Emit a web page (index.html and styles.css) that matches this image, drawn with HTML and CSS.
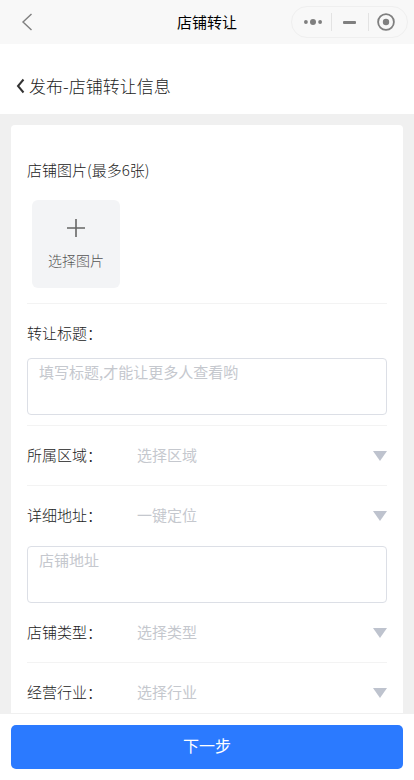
FILE: index.html
```html
<!DOCTYPE html>
<html lang="zh-CN">

<head>
    <meta charset="UTF-8">
    <meta name="viewport" content="width=device-width, initial-scale=1.0">
    <title>店铺转让</title>
    <link rel="stylesheet" href="styles.css">
</head>

<body>
    <div class="nav-bar">
        <svg class="nav-back" width="14" height="20" viewBox="0 0 14 20">
            <path d="M11.5 2 L3 10 L11.5 18" fill="none" stroke="#7f7f7f" stroke-width="1.4" />
        </svg>
        <span class="nav-title">店铺转让</span>
        <div class="capsule">
            <svg class="capsule-icon" width="18" height="8" viewBox="0 0 18 8">
                <circle cx="1.9" cy="4" r="1.9" fill="#7f7f7f" />
                <circle cx="9" cy="4" r="3" fill="#7f7f7f" />
                <circle cx="16.1" cy="4" r="1.9" fill="#7f7f7f" />
            </svg>
            <span class="capsule-line"></span>
            <span class="capsule-minus"></span>
            <span class="capsule-line"></span>
            <svg class="capsule-icon" width="18" height="18" viewBox="0 0 18 18">
                <circle cx="9" cy="9" r="7.9" fill="none" stroke="#7f7f7f" stroke-width="1.8" />
                <circle cx="9" cy="9" r="3.2" fill="#7f7f7f" />
            </svg>
        </div>
    </div>

    <div class="page-head">
        <svg width="9" height="16" viewBox="0 0 9 16">
            <path d="M7.5 1.5 L2 8 L7.5 14.5" fill="none" stroke="#333" stroke-width="2" />
        </svg>
        <span>发布-店铺转让信息</span>
    </div>

    <div class="content">
        <div class="card">
            <div class="photo-section">
                <div class="photo-label">店铺图片(最多6张)</div>
                <div class="photo-box">
                    <svg width="18" height="18" viewBox="0 0 18 18">
                        <path d="M0 9 H18 M9 0 V18" stroke="#666" stroke-width="1.6" />
                    </svg>
                    <span>选择图片</span>
                </div>
            </div>

            <div class="title-section">
                <div class="field-label">转让标题：</div>
                <div class="text-box">填写标题,才能让更多人查看哟</div>
            </div>

            <div class="select-row">
                <span class="field-label">所属区域：</span>
                <span class="select-value">选择区域</span>
                <span class="arrow"></span>
            </div>

            <div class="select-row no-line">
                <span class="field-label">详细地址：</span>
                <span class="select-value">一键定位</span>
                <span class="arrow"></span>
            </div>
            <div class="text-box address-box">店铺地址</div>

            <div class="select-row">
                <span class="field-label">店铺类型：</span>
                <span class="select-value">选择类型</span>
                <span class="arrow"></span>
            </div>

            <div class="select-row no-line">
                <span class="field-label">经营行业：</span>
                <span class="select-value">选择行业</span>
                <span class="arrow"></span>
            </div>
        </div>
    </div>

    <div class="footer">
        <div class="next-btn">下一步</div>
    </div>
</body>

</html>
```

FILE: styles.css
```css
* {
    box-sizing: border-box;
}

html,
body {
    height: 100%;
}

body {
    margin: 0;
    height: 780px;
    overflow: hidden;
    background-color: #f0f0f0;
    color: #222;
    font-family: "Noto Sans CJK SC", "Liberation Sans", sans-serif;
    font-weight: 300;
}

.nav-bar {
    position: relative;
    height: 44px;
    background-color: #f8f8f8;
    display: flex;
    align-items: center;
    padding-left: 20px;
}

.nav-back {
    display: block;
}

.nav-title {
    position: absolute;
    left: 0;
    right: 0;
    top: 13px;
    text-align: center;
    font-size: 15px;
    font-weight: 400;
    line-height: 18px;
    color: #000;
}

.capsule {
    position: absolute;
    left: 291px;
    top: 6px;
    width: 117px;
    height: 32px;
    border: 1px solid #efefef;
    border-radius: 16px;
    display: flex;
    align-items: center;
    padding-left: 12px;
}

.capsule-icon {
    display: block;
    flex: none;
}

.capsule-line {
    width: 1px;
    height: 18px;
    margin: 0 8px 0 9px;
    background-color: #e3e3e3;
}

.capsule-minus {
    width: 13px;
    height: 3px;
    margin: 0 3px;
    background-color: #7f7f7f;
    border-radius: 1px;
}

.page-head {
    height: 70px;
    padding: 13px 0 0 16px;
    background-color: #fff;
    display: flex;
    align-items: center;
    gap: 4px;
    font-size: 17px;
    line-height: 22px;
    color: #222;
}

.content {
    padding: 11px 11px 0;
}

.card {
    background-color: #fff;
    border-radius: 4px;
    padding: 0 16px;
}

.photo-section {
    height: 179px;
    padding-top: 35px;
    border-bottom: 1px solid #f3f3f3;
}

.photo-label {
    font-size: 15px;
    line-height: 20px;
}

.photo-box {
    width: 88px;
    height: 88px;
    margin: 20px 0 0 5px;
    background-color: #f3f4f6;
    border-radius: 6px;
    display: flex;
    flex-direction: column;
    align-items: center;
    padding-top: 19px;
    gap: 13px;
    font-size: 14px;
    line-height: 20px;
    color: #555;
}

.title-section {
    height: 122px;
    padding-top: 19px;
    border-bottom: 1px solid #f3f3f3;
}

.field-label {
    font-size: 15px;
    line-height: 20px;
    color: #222;
}

.text-box {
    height: 57px;
    margin-top: 15px;
    padding: 3px 11px;
    border: 1px solid #dcdfe6;
    border-radius: 4px;
    font-size: 15px;
    font-weight: 400;
    line-height: 20px;
    color: #c5c8ce;
}

.select-row {
    height: 60px;
    display: flex;
    align-items: center;
    border-bottom: 1px solid #f3f3f3;
}

.select-row.no-line {
    border-bottom: 0;
}

.select-row .field-label {
    width: 110px;
    margin-bottom: 2px;
}

.select-value {
    flex: 1;
    margin-bottom: 2px;
    font-size: 15px;
    font-weight: 400;
    line-height: 20px;
    color: #c5c8ce;
}

.arrow {
    width: 0;
    height: 0;
    border-left: 7px solid transparent;
    border-right: 7px solid transparent;
    border-top: 10px solid #bec3ce;
}

.address-box {
    margin-top: 0;
}

.footer {
    position: fixed;
    left: 0;
    right: 0;
    bottom: 0;
    height: 67px;
    padding: 11px 11px 0;
    background-color: #fff;
    border-top: 1px solid #f0f0f0;
}

.next-btn {
    height: 44px;
    background-color: #2b7aff;
    border-radius: 5px;
    color: #fff;
    font-size: 16px;
    font-weight: 400;
    line-height: 41px;
    text-align: center;
}
```
